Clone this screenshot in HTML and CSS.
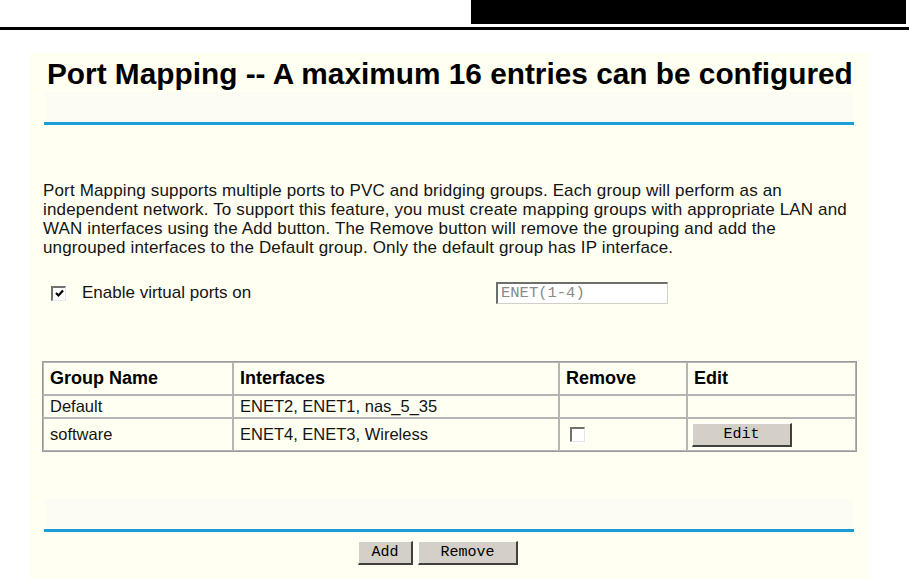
FILE: index.html
```html
<!DOCTYPE html>
<html>

<head>
    <link rel="stylesheet" href="styles.css">
</head>

<body>
    <div class="top">
        <div class="top-box"></div>
    </div>
    <div class="panel">
        <h1 class="title">Port Mapping -- A maximum 16 entries can be configured</h1>
        <div class="rule"></div>
        <p class="intro">Port Mapping supports multiple ports to PVC and bridging groups. Each group will perform as an<br>
            independent network. To support this feature, you must create mapping groups with appropriate LAN and<br>
            WAN interfaces using the Add button. The Remove button will remove the grouping and add the<br>
            ungrouped interfaces to the Default group. Only the default group has IP interface.</p>
        <div class="virtual">
            <label class="virtual-label">
                <span class="box">
                    <svg width="11" height="11" viewBox="0 0 11 11"><path d="M2 5 L4.5 7.5 L9 2.5" fill="none" stroke="#000" stroke-width="2.2"/></svg>
                </span>
                Enable virtual ports on
            </label>
            <div class="ports">ENET(1-4)</div>
        </div>
        <table class="groups">
            <tr class="head">
                <th class="col-name">Group Name</th>
                <th class="col-if">Interfaces</th>
                <th class="col-rm">Remove</th>
                <th class="col-edit">Edit</th>
            </tr>
            <tr class="row-short">
                <td>Default</td>
                <td>ENET2, ENET1, nas_5_35</td>
                <td></td>
                <td></td>
            </tr>
            <tr class="row-tall">
                <td>software</td>
                <td>ENET4, ENET3, Wireless</td>
                <td><span class="box rm-box"></span></td>
                <td><button class="btn btn-edit">Edit</button></td>
            </tr>
        </table>
        <div class="rule rule-bottom"></div>
        <div class="actions">
            <button class="btn btn-add">Add</button>
            <button class="btn btn-remove">Remove</button>
        </div>
    </div>
</body>

</html>
```

FILE: styles.css
```css
body {
    margin: 0;
    background: #fff;
    font-family: "Liberation Sans", Arial, sans-serif;
    color: #000;
}

.top {
    height: 27px;
    border-bottom: 3px solid #000;
}

.top-box {
    margin-left: 471px;
    width: 435px;
    height: 24px;
    background: #000;
}

.panel {
    margin: 23px 0 0 29px;
    width: 840px;
    height: 526px;
    background: #fffff2;
}

.title {
    margin: 0;
    padding: 3px 0 0 18px;
    font-size: 29.8px;
    font-weight: bold;
    line-height: 36px;
    white-space: nowrap;
}

.rule {
    margin-left: 15px;
    width: 810px;
    height: 30px;
    border-bottom: 3px solid #1a9ed6;
    background: #fcfcf5;
}

.intro {
    margin: 56px 0 0 14px;
    width: 826px;
    font-size: 17px;
    letter-spacing: 0.15px;
    line-height: 19px;
    color: #141414;
    white-space: nowrap;
}

.virtual {
    display: flex;
    align-items: center;
    height: 22px;
    margin: 25px 0 0 22px;
    font-size: 17px;
    color: #141414;
}

.virtual-label {
    display: flex;
    align-items: center;
    gap: 16px;
    width: 445px;
}

.box {
    display: inline-flex;
    align-items: center;
    justify-content: center;
    box-sizing: border-box;
    width: 15px;
    height: 15px;
    background: #fff;
    border-top: 2px solid #707070;
    border-left: 2px solid #707070;
    border-right: 1px solid #e6e6e6;
    border-bottom: 1px solid #e6e6e6;
    box-shadow: 1px 1px 0 #fff;
}

.ports {
    box-sizing: border-box;
    width: 172px;
    height: 22px;
    padding: 1px 3px;
    border-top: 2px solid #6e6e6e;
    border-left: 2px solid #6e6e6e;
    border-right: 1px solid #d4d0c8;
    border-bottom: 1px solid #d4d0c8;
    background: #fff;
    font-family: "Liberation Mono", monospace;
    font-size: 15.5px;
    line-height: 17px;
    color: #8a8a8a;
}

.groups {
    margin: 57px 0 0 13px;
    width: 815px;
    border: 1px solid #9a9a9a;
    border-spacing: 0;
}

.groups th,
.groups td {
    border: 1px solid #b4b4b4;
    padding: 0 6px;
    text-align: left;
    font-size: 16.5px;
    font-weight: normal;
    color: #141414;
}

.groups th {
    font-size: 18px;
    font-weight: bold;
    color: #000;
}

.head th {
    height: 31px;
}

.row-short td {
    height: 21px;
}

.row-tall td {
    height: 31px;
}

.col-name {
    width: 176px;
}

.col-if {
    width: 312px;
}

.col-rm {
    width: 114px;
}

.rm-box {
    margin: 4px 0 0 4px;
}

.btn {
    box-sizing: border-box;
    height: 24px;
    padding: 0;
    background: #d4d0c8;
    border-top: 1px solid #fff;
    border-left: 1px solid #fff;
    border-right: 2px solid #404040;
    border-bottom: 2px solid #404040;
    font-family: "Liberation Mono", monospace;
    font-size: 15px;
    color: #000;
}

.btn-edit {
    width: 100px;
    margin-left: -2px;
}

.rule-bottom {
    margin-top: 47px;
}

.actions {
    display: flex;
    gap: 5px;
    margin: 9px 0 0 329px;
}

.btn-add {
    width: 55px;
}

.btn-remove {
    width: 100px;
}
```
